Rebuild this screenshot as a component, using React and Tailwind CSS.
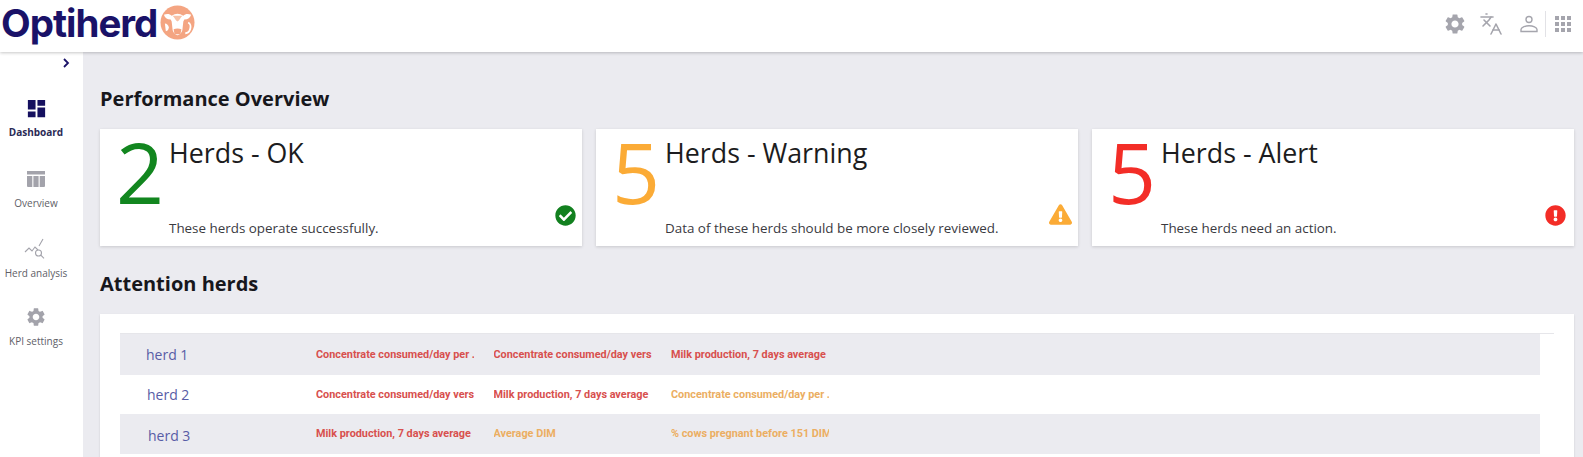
import { Languages } from "lucide-react";
import { FaCheckCircle, FaExclamationCircle, FaExclamationTriangle } from "react-icons/fa";
import { MdApps, MdDashboard, MdSettings } from "react-icons/md";

const red = "text-[#d8504e]";
const amber = "text-[#ebae62]";

const cards = [
  { count: "2", color: "text-[#12861f]", title: "Herds - OK", text: "These herds operate successfully.", iconPos: "right-[5px]", icon: <FaCheckCircle className="text-[21px] text-[#12801f]" /> },
  { count: "5", color: "text-[#fbab36]", title: "Herds - Warning", text: "Data of these herds should be more closely reviewed.", iconPos: "right-[6px]", icon: <FaExclamationTriangle className="text-[23px] text-[#fbab36]" /> },
  { count: "5", color: "text-[#f32d27]", title: "Herds - Alert", text: "These herds need an action.", iconPos: "right-[7px]", icon: <FaExclamationCircle className="text-[21px] text-[#f32d27]" /> },
];

const herds = [
  {
    name: "herd 1",
    pad: "pl-[26px]",
    row: "bg-[#ebebf0] h-[41px]",
    kpis: [
      ["Concentrate consumed/day per .", red],
      ["Concentrate consumed/day vers", red],
      ["Milk production, 7 days average", red],
    ],
  },
  {
    name: "herd 2",
    pad: "pl-[27px]",
    row: "bg-white h-[39px]",
    kpis: [
      ["Concentrate consumed/day vers", red],
      ["Milk production, 7 days average", red],
      ["Concentrate consumed/day per .", amber],
    ],
  },
  {
    name: "herd 3",
    pad: "pl-[28px] mt-[2px]",
    row: "bg-[#ebebf0] h-[40px]",
    kpis: [
      ["Milk production, 7 days average", red],
      ["Average DIM", amber],
      ["% cows pregnant before 151 DIM", amber],
    ],
  },
];

function CowLogo() {
  return (
    <svg viewBox="0 0 36 36" className="w-[35px] h-[35px] ml-[3px]">
      <circle cx="18" cy="18" r="17.5" fill="#f4a582" />
      <path d="M4 10c3-1 6-1 8 1 2-1 4-2 6-2s4 1 6 2c2-2 5-2 8-1-1 3-3 5-7 5l-1 2-1 9c-1 3-3 5-5 5s-4-2-5-5l-1-9-1-2c-4 0-6-2-7-5z" fill="#fff" />
      <path d="M5 19c2 0 4 2 4 4s-1 4-3 4z" fill="#fff" />
      <path d="M29 18c2 1 3 4 2 7s-3 4-5 4" fill="none" stroke="#fff" strokeWidth="2" />
      <path d="M14 25c2-1 6-1 8 0l-1 5h-6z" fill="#f4a582" />
      <path d="M13 11c2 2 3 5 5 6 2-1 3-4 5-6z" fill="#f7c2a8" />
    </svg>
  );
}

function PersonIcon() {
  return (
    <svg viewBox="0 0 20 20" className="w-[20px] h-[20px]" fill="none" stroke="#a5a5ad" strokeWidth="1.4">
      <circle cx="10" cy="5.5" r="3" />
      <path d="M2 17.5v-2c0-2 4-3.7 8-3.7s8 1.7 8 3.7v2z" />
    </svg>
  );
}

function OverviewIcon() {
  return (
    <svg viewBox="0 0 20 18" className="w-[20px] h-[18px]" fill="#a3a3ab">
      <path d="M1 1h18v3.500H1z" />
      <path d="M1 6h5.300v11H2a1 1 0 0 1-1-1zM7.400 6h5.200v11H7.400zM13.700 6H19v10a1 1 0 0 1-1 1h-4.300z" />
    </svg>
  );
}

function AnalysisIcon() {
  return (
    <svg viewBox="0 0 24 22" className="w-[24px] h-[22px]" fill="none" stroke="#a3a3ab" strokeWidth="1.1">
      <path d="M1 14l4-4 3 3 3-4 3 3M15 8l4-7" />
      <circle cx="14.500" cy="15" r="3" />
      <path d="M16.800 17.200l3.200 3.200" />
    </svg>
  );
}

function NavItem({ icon, label, active, height }) {
  return (
    <div className={`flex flex-col items-center w-[72px] ${height}`}>
      <div className="h-[24px] flex items-center justify-center">{icon}</div>
      <span className={`mt-[5px] text-[10px] leading-[14px] whitespace-nowrap ${active ? "font-bold text-[#2b2a55]" : "text-[#606067]"}`}>
        {label}
      </span>
    </div>
  );
}

export default function App() {
  return (
    <div className="w-[1583px] h-[457px] overflow-hidden flex flex-col bg-[#ebebf0] font-['Open_Sans',sans-serif]">
      <header className="relative z-10 h-[52px] shrink-0 bg-white flex items-center shadow-[0_1px_3px_rgba(0,0,0,0.22)]">
        <div className="flex items-center -mt-[7px] pl-[1px]">
          <span className="font-['Inter',sans-serif] font-bold text-[38.500px] leading-[44px] tracking-[-1px] text-[#1a1268]">Optiherd</span>
          <CowLogo />
        </div>
        <div className="ml-auto flex items-center -mt-[5px] text-[#a5a5ad]">
          <MdSettings className="text-[24px]" />
          <Languages className="w-[24px] h-[24px] ml-[12px]" strokeWidth={1.6} />
          <div className="ml-[16px]"><PersonIcon /></div>
          <div className="ml-[6px] w-px h-[26px] bg-[#e2e2e6]" />
          <MdApps className="text-[24px] ml-[5px] mr-[8px]" />
        </div>
      </header>

      <div className="flex flex-1 min-h-0">
        <aside className="w-[83px] shrink-0 bg-white">
          <div className="h-[44px] pt-[6px] pl-[62px]">
            <svg viewBox="0 0 8 10" className="w-[8px] h-[10px]" fill="none" stroke="#1a1268" strokeWidth="1.800">
              <path d="M2 1l4 4-4 4" />
            </svg>
          </div>
          <NavItem active height="h-[71px]" label="Dashboard" icon={<MdDashboard className="text-[23px] text-[#15105f]" />} />
          <NavItem height="h-[70px]" label="Overview" icon={<OverviewIcon />} />
          <NavItem height="h-[68px]" label="Herd analysis" icon={<AnalysisIcon />} />
          <NavItem height="h-[60px]" label="KPI settings" icon={<MdSettings className="text-[22px] text-[#a3a3ab]" />} />
        </aside>

        <main className="flex-1 min-w-0 pl-[17px] pr-[9px]">
          <h2 className="mt-[34px] h-[26px] text-[20px] leading-[26px] font-bold text-[#17171c]">Performance Overview</h2>
          <div className="mt-[17px] grid grid-cols-3 gap-[14px]">
            {cards.map((card) => (
              <div key={card.title} className="relative h-[117px] bg-white shadow-[0_1px_3px_rgba(0,0,0,0.15)] pl-[16px] flex">
                <div className={`w-[53px] shrink-0 text-[84px] leading-[83px] font-normal mt-[1px] ${card.color}`}>{card.count}</div>
                <div className="flex-1 flex flex-col">
                  <div className="text-[26.800px] leading-[36px] text-[#1c1c20] mt-[6px]">{card.title}</div>
                  <div className="mt-auto mb-[8px] text-[13.400px] leading-[19px] text-[#3a3a3f]">{card.text}</div>
                </div>
                <div className={`absolute bottom-[20px] w-[24px] flex justify-center ${card.iconPos}`}>{card.icon}</div>
              </div>
            ))}
          </div>

          <h2 className="mt-[25px] h-[26px] text-[20px] leading-[26px] font-bold text-[#17171c]">Attention herds</h2>
          <section className="mt-[17px] h-[200px] bg-white pl-[20px] pr-[20px] pt-[19px] shadow-[0_1px_2px_rgba(0,0,0,0.12)]">
            <div className="border-t border-[#e6e6ea]">
              {herds.map((herd) => (
                <div key={herd.name} className={`flex items-center mr-[14px] ${herd.row}`}>
                  <div className={`w-[196px] shrink-0 text-[14px] text-[#585ca6] ${herd.pad}`}>{herd.name}</div>
                  {herd.kpis.map(([label, color]) => (
                    <div key={label} className="w-[177.500px] shrink-0 mt-[1px]">
                      <div className={`w-[158px] overflow-hidden whitespace-nowrap font-['Roboto',sans-serif] font-bold text-[10.850px] ${color}`}>{label}</div>
                    </div>
                  ))}
                </div>
              ))}
            </div>
          </section>
        </main>
      </div>
    </div>
  );
}
